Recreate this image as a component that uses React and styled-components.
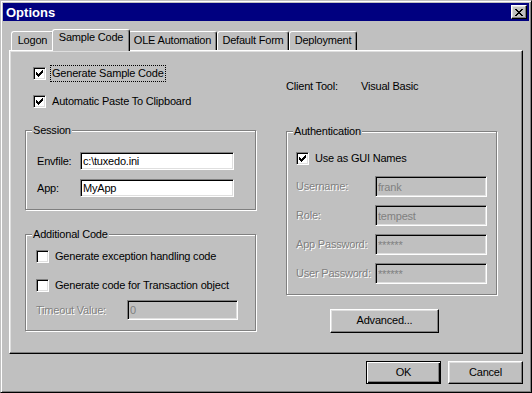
import React from "react"
import styled, { createGlobalStyle } from "styled-components"

const GlobalStyle = createGlobalStyle`
  * {
    box-sizing: border-box;
  }
  html,
  body {
    margin: 0;
    padding: 0;
    background: #c0c0c0;
  }
  body {
    font-family: "Liberation Sans", Arial, sans-serif;
    font-size: 11px;
    line-height: 13px;
    letter-spacing: -0.2px;
    color: #000;
  }
`

const Window = styled.div`
  width: 532px;
  height: 393px;
  display: flex;
  flex-direction: column;
  padding: 2px;
  background: #c0c0c0;
  border: 1px solid;
  border-color: #c0c0c0 #000 #000 #c0c0c0;
  box-shadow: inset 1px 1px #fff, inset -1px -1px #808080;
`

const TitleBar = styled.div`
  flex: none;
  height: 18px;
  display: flex;
  align-items: center;
  justify-content: space-between;
  padding: 0 2px 0 3px;
  background: #000080;
  color: #fff;
  font-size: 13px;
  font-weight: bold;
  letter-spacing: 0;
`

const CloseButton = styled.button`
  width: 16px;
  height: 14px;
  padding: 0;
  display: flex;
  align-items: center;
  justify-content: center;
  background: #c0c0c0;
  border: 1px solid;
  border-color: #fff #000 #000 #fff;
  box-shadow: inset -1px -1px #808080, inset 1px 1px #dfdfdf;

  svg {
    display: block;
  }
`

const Body = styled.div`
  flex: 1;
  display: flex;
  flex-direction: column;
  padding: 8px 6px 6px;
`

const TabRow = styled.div`
  flex: none;
  height: 21px;
  display: flex;
  align-items: flex-end;
  padding-left: 2px;
`

const Tab = styled.div`
  position: relative;
  z-index: ${p => (p.$active ? 1 : 0)};
  width: ${p => p.$w}px;
  height: ${p => (p.$active ? 22 : 19)}px;
  margin: ${p => (p.$active ? "0 -2px -1px" : "0")};
  padding-top: ${p => (p.$active ? 1 : 2)}px;
  text-align: center;
  white-space: nowrap;
  background: #c0c0c0;
  border: 1px solid;
  border-bottom: 0;
  border-color: #fff #000 #fff #fff;
  border-radius: 3px 3px 0 0;
  box-shadow: inset -1px 0 #808080;
`

const Panel = styled.div`
  flex: none;
  height: 304px;
  display: grid;
  grid-template-columns: 231px 211px;
  column-gap: 30px;
  align-items: start;
  padding: 14px 0 0 15px;
  border: 1px solid;
  border-color: #fff #000 #000 #fff;
  box-shadow: inset -1px -1px #808080, inset 1px 1px #dfdfdf;
`

const Column = styled.div`
  display: flex;
  flex-direction: column;
  align-items: flex-start;
`

const CheckRow = styled.label`
  height: 17px;
  display: flex;
  align-items: center;
  margin: ${p => p.$mt || 0}px 0 0 ${p => p.$ml || 0}px;
`

const Box = styled.span`
  flex: none;
  width: 13px;
  height: 13px;
  margin-right: 4px;
  display: flex;
  align-items: center;
  justify-content: center;
  background: #fff;
  border: 1px solid;
  border-color: #808080 #fff #fff #808080;
  box-shadow: inset 1px 1px #000, inset -1px -1px #dfdfdf;

  svg {
    display: block;
  }
`

const Caption = styled.span`
  padding: 1px;
  white-space: nowrap;
  border: 1px ${p => (p.$focus ? "dotted #000" : "solid transparent")};
`

const Group = styled.div`
  position: relative;
  width: 100%;
  margin-top: ${p => p.$mt}px;
  padding: ${p => p.$pad};
  border: 1px solid #808080;
  box-shadow: inset 1px 1px #fff, 1px 1px #fff;
`

const Legend = styled.span`
  position: absolute;
  top: -7px;
  left: 6px;
  padding: 0 1px;
  line-height: 13px;
  background: #c0c0c0;
`

const FieldRow = styled.div`
  display: flex;
  align-items: center;
  margin-top: ${p => p.$mt || 0}px;
`

const FieldLabel = styled.span`
  flex: none;
  width: ${p => p.$w}px;
  white-space: nowrap;
  color: ${p => (p.$disabled ? "#808080" : "#000")};
  text-shadow: ${p => (p.$disabled ? "1px 1px 0 #fff" : "none")};
`

const TextBox = styled.input`
  width: ${p => p.$w}px;
  height: ${p => p.$h}px;
  padding: 0 2px;
  font: inherit;
  letter-spacing: inherit;
  color: #000;
  background: #fff;
  border: 1px solid;
  border-color: #808080 #fff #fff #808080;
  border-radius: 0;
  box-shadow: inset 1px 1px #000, inset -1px -1px #dfdfdf;
  outline: none;

  &:disabled {
    color: #808080;
    background: #c0c0c0;
  }
`

const InfoRow = styled.div`
  height: 13px;
  display: flex;
  margin-top: 15px;
  white-space: nowrap;
`

const InfoLabel = styled.span`
  width: 75px;
`

const Button = styled.button`
  width: ${p => p.$w}px;
  height: ${p => p.$h}px;
  margin: ${p => p.$margin || 0};
  padding: 0 0 1px;
  font: inherit;
  letter-spacing: inherit;
  color: #000;
  background: #c0c0c0;
  border: 1px solid;
  border-color: ${p => (p.$default ? "#000" : "#fff #000 #000 #fff")};
  border-radius: 0;
  box-shadow: ${p =>
    p.$default
      ? "inset 1px 1px #fff, inset -1px -1px #000, inset -2px -2px #808080"
      : "inset -1px -1px #808080, inset 1px 1px #dfdfdf"};
`

const ButtonRow = styled.div`
  display: flex;
  justify-content: flex-end;
  gap: 7px;
  margin-top: 7px;
`

const CheckMark = () => (
  <svg width="7" height="7" viewBox="0 0 7 7" shapeRendering="crispEdges">
    <path
      fill="#000"
      d="M6 0h1v1h-1z M5 1h2v1h-2z M0 2h1v1h-1z M4 2h3v1h-3z M0 3h2v1h-2z M3 3h3v1h-3z M0 4h5v1h-5z M1 5h3v1h-3z M2 6h1v1h-1z"
    />
  </svg>
)

const CloseGlyph = () => (
  <svg width="8" height="7" viewBox="0 0 8 7" shapeRendering="crispEdges">
    <path
      fill="#000"
      d="M0 0h2v1h-2z M6 0h2v1h-2z M1 1h2v1h-2z M5 1h2v1h-2z M2 2h4v1h-4z M3 3h2v1h-2z M2 4h4v1h-4z M1 5h2v1h-2z M5 5h2v1h-2z M0 6h2v1h-2z M6 6h2v1h-2z"
    />
  </svg>
)

const Check = ({ checked, focus, ml, mt, children }) => (
  <CheckRow $ml={ml} $mt={mt}>
    <Box>{checked && <CheckMark />}</Box>
    <Caption $focus={focus}>{children}</Caption>
  </CheckRow>
)

const tabs = [
  { label: "Logon", w: 43 },
  { label: "Sample Code", w: 78, active: true },
  { label: "OLE Automation", w: 89 },
  { label: "Default Form", w: 72 },
  { label: "Deployment", w: 68 },
]

const authFields = [
  { label: "Username:", value: "frank", mt: 9 },
  { label: "Role:", value: "tempest", mt: 8 },
  { label: "App Password:", value: "******", mt: 8 },
  { label: "User Password:", value: "******", mt: 8 },
]

const App = () => {
  return (
    <>
      <GlobalStyle />
      <Window>
        <TitleBar>
          <span>Options</span>
          <CloseButton aria-label="Close">
            <CloseGlyph />
          </CloseButton>
        </TitleBar>

        <Body>
          <TabRow>
            {tabs.map(t => (
              <Tab key={t.label} $w={t.w} $active={t.active}>
                {t.label}
              </Tab>
            ))}
          </TabRow>

          <Panel>
            <Column>
              <Check checked focus ml={8}>
                Generate Sample Code
              </Check>
              <Check checked ml={8} mt={11}>
                Automatic Paste To Clipboard
              </Check>

              <Group $mt={20} $pad="21px 0 12px 11px">
                <Legend>Session</Legend>
                <FieldRow>
                  <FieldLabel $w={43}>Envfile:</FieldLabel>
                  <TextBox $w={154} $h={18} defaultValue="c:\tuxedo.ini" readOnly />
                </FieldRow>
                <FieldRow $mt={9}>
                  <FieldLabel $w={43}>App:</FieldLabel>
                  <TextBox $w={154} $h={18} defaultValue="MyApp" readOnly />
                </FieldRow>
              </Group>

              <Group $mt={24} $pad="13px 0 10px 10px">
                <Legend>Additional Code</Legend>
                <Check>Generate exception handling code</Check>
                <Check mt={12}>Generate code for Transaction object</Check>
                <FieldRow $mt={6}>
                  <FieldLabel $w={91} $disabled>
                    Timeout Value:
                  </FieldLabel>
                  <TextBox $w={111} $h={20} defaultValue="0" disabled />
                </FieldRow>
              </Group>
            </Column>

            <Column>
              <InfoRow>
                <InfoLabel>Client Tool:</InfoLabel>
                <span>Visual Basic</span>
              </InfoRow>

              <Group $mt={38} $pad="18px 0 10px 9px">
                <Legend>Authentication</Legend>
                <Check checked>Use as GUI Names</Check>
                {authFields.map(f => (
                  <FieldRow key={f.label} $mt={f.mt}>
                    <FieldLabel $w={79} $disabled>
                      {f.label}
                    </FieldLabel>
                    <TextBox $w={112} $h={21} defaultValue={f.value} disabled />
                  </FieldRow>
                ))}
              </Group>

              <Button $w={109} $h={24} $margin="14px 0 0 44px">
                Advanced...
              </Button>
            </Column>
          </Panel>

          <ButtonRow>
            <Button $w={75} $h={23} $default>
              OK
            </Button>
            <Button $w={75} $h={23}>
              Cancel
            </Button>
          </ButtonRow>
        </Body>
      </Window>
    </>
  )
}

export default App
